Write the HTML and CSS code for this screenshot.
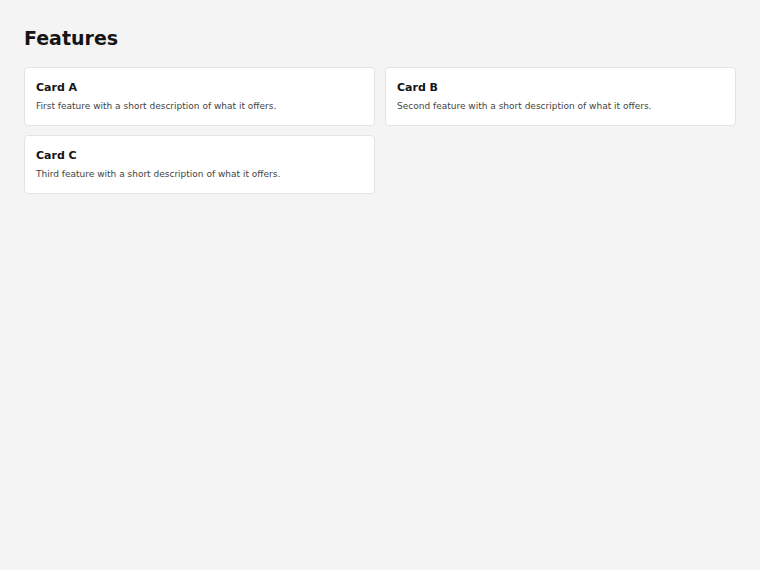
FILE: index.html
```html
<!DOCTYPE html>
<html lang="en">
<head>
    <meta charset="UTF-8">
    <meta name="viewport" content="width=device-width, initial-scale=1.0">
    <title>Features</title>
    <link rel="stylesheet" href="styles.css">
</head>
<body>
    <div class="page">
        <h1 class="title">Features</h1>
        <div class="cards">
            <div class="card">
                <h2 class="card-title">Card A</h2>
                <p class="card-text">First feature with a short description of what it offers.</p>
            </div>
            <div class="card">
                <h2 class="card-title">Card B</h2>
                <p class="card-text">Second feature with a short description of what it offers.</p>
            </div>
            <div class="card">
                <h2 class="card-title">Card C</h2>
                <p class="card-text">Third feature with a short description of what it offers.</p>
            </div>
        </div>
    </div>
</body>
</html>
```

FILE: styles.css
```css
* {
    box-sizing: border-box;
}

body {
    font-family: 'DejaVu Sans', sans-serif;
    background: #f4f4f4;
    margin: 0;
    color: #151515;
}

.page {
    padding: 24px;
}

.title {
    font-size: 19px;
    line-height: 28px;
    font-weight: bold;
    margin: 0 0 15px;
}

.cards {
    display: grid;
    grid-template-columns: 1fr 1fr;
    gap: 9px 10px;
}

.card {
    background: #fff;
    border: 1px solid #e4e4e4;
    border-radius: 4px;
    padding: 13px 11px 12px;
}

.card-title {
    font-size: 11px;
    line-height: 14px;
    font-weight: bold;
    margin: 0 0 4px;
}

.card-text {
    font-size: 9px;
    line-height: 14px;
    margin: 0;
    color: #444;
}
```
